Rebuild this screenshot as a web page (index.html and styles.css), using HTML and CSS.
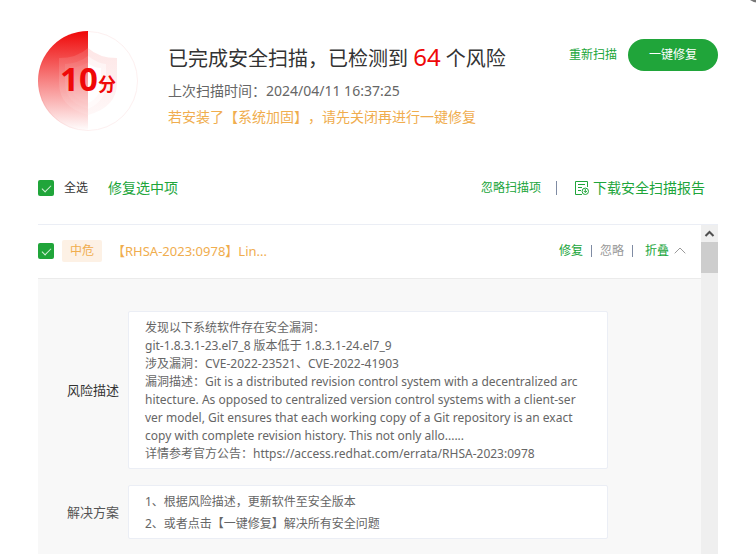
FILE: index.html
```html
<!DOCTYPE html>
<html lang="zh-CN">
<head>
<meta charset="utf-8">
<title>安全扫描</title>
<link rel="stylesheet" href="styles.css">
</head>
<body>
<button class="close" type="button" aria-label="关闭"></button>
<main class="page">
  <header class="summary">
    <div class="score">
      <svg class="score-art" viewBox="0 0 100 100" aria-hidden="true">
        <defs>
          <linearGradient id="half" x1="0" y1="0" x2="0" y2="1">
            <stop offset="0" stop-color="#ef0808"/>
            <stop offset="1" stop-color="#ef0808" stop-opacity="0"/>
          </linearGradient>
          <linearGradient id="shieldRed" x1="0" y1="0" x2="0" y2="1">
            <stop offset="0" stop-color="#ef0808" stop-opacity=".1"/>
            <stop offset="1" stop-color="#ef0808" stop-opacity=".03"/>
          </linearGradient>
          <clipPath id="leftSide"><path d="M0 0H50V100H0Z"/></clipPath>
          <clipPath id="rightSide"><path d="M50 0H100V100H50Z"/></clipPath>
        </defs>
        <circle cx="50" cy="50" r="49.5" fill="none" stroke="#fdf0f0"/>
        <path d="M50 0A50 50 0 0 0 50 100Z" fill="url(#half)"/>
        <g clip-path="url(#leftSide)" fill="#fff" fill-opacity=".12">
          <path d="M50 17Q39 27 21 27V52Q21 76 50 84Z"/>
          <path d="M50 25Q41 32 27 33V52Q27 71 50 78Z" fill-opacity=".08"/>
          <path d="M50 31Q43 36 32 37V52Q32 67 50 73Z" fill-opacity=".05"/>
        </g>
        <g clip-path="url(#rightSide)">
          <path d="M50 17Q61 27 79 27V52Q79 76 50 84Z" fill="url(#shieldRed)"/>
          <path d="M50 25Q59 32 68 33V52Q68 70 50 78Z" fill="#fff" fill-opacity=".5"/>
          <path d="M50 32Q56 37 63 37V52Q63 66 50 72Z" fill="#fff"/>
        </g>
      </svg>
      <p class="score-text">10<span class="score-unit">分</span></p>
    </div>
    <div class="info">
      <h1 class="title">已完成安全扫描，已检测到 <span class="count">64</span> 个风险</h1>
      <p class="time">上次扫描时间：2024/04/11 16:37:25</p>
      <p class="notice">若安装了【系统加固】，请先关闭再进行一键修复</p>
    </div>
    <div class="actions">
      <a class="link" href="#">重新扫描</a>
      <button class="primary" type="button">一键修复</button>
    </div>
  </header>

  <div class="toolbar">
    <label class="select-all"><input class="check" type="checkbox" checked>全选</label>
    <a class="link large" href="#">修复选中项</a>
    <div class="toolbar-right">
      <a class="link" href="#">忽略扫描项</a>
      <span class="bar"></span>
      <a class="link large download" href="#">
        <svg class="report-icon" viewBox="0 0 14 14" fill="none" stroke="#20a53a" aria-hidden="true">
          <path d="M12.500 6V.5H.5v13H7"/>
          <path d="M3 3.500h7M3 6.500h4M3 9.500h3"/>
          <circle cx="10.300" cy="10.300" r="3.200"/>
          <path d="M10.300 8v3.200M8.800 10l1.500 1.500L12 10"/>
        </svg>下载安全扫描报告</a>
    </div>
  </div>

  <section class="list">
    <div class="items">
      <div class="item">
        <input class="check" type="checkbox" checked aria-label="选择 RHSA-2023:0978">
        <span class="level">中危</span>
        <span class="name">【RHSA-2023:0978】Lin...</span>
        <div class="item-actions">
          <a class="link" href="#">修复</a>
          <span class="bar small"></span>
          <a class="link muted" href="#">忽略</a>
          <span class="bar small"></span>
          <a class="link fold" href="#">折叠<svg class="arrow" viewBox="0 0 12 7" fill="none" stroke="#999" aria-hidden="true"><path d="M.7 6.300 6 1l5.300 5.300"/></svg></a>
        </div>
      </div>
      <dl class="detail">
        <div class="row">
          <dt class="label strong">风险描述</dt>
          <dd class="box desc">发现以下系统软件存在安全漏洞：<br>git-1.8.3.1-23.el7_8 版本低于 1.8.3.1-24.el7_9<br>涉及漏洞：CVE-2022-23521、CVE-2022-41903<br>漏洞描述：Git is a distributed revision control system with a decentralized arc<br>hitecture. As opposed to centralized version control systems with a client-ser<br>ver model, Git ensures that each working copy of a Git repository is an exact<br>copy with complete revision history. This not only allo......<br>详情参考官方公告：https://access.redhat.com/errata/RHSA-2023:0978</dd>
        </div>
        <div class="row">
          <dt class="label">解决方案</dt>
          <dd class="box steps">1、根据风险描述，更新软件至安全版本<br>2、或者点击【一键修复】解决所有安全问题</dd>
        </div>
      </dl>
    </div>
    <div class="scrollbar" aria-hidden="true">
      <svg class="scroll-up" viewBox="0 0 17 17" fill="none" stroke="#505050" stroke-width="2"><path d="M4.500 11l4-4 4 4"/></svg>
      <div class="thumb"></div>
    </div>
  </section>
</main>
</body>
</html>
```

FILE: styles.css
```css
* { box-sizing: border-box; }

body {
  margin: 0;
  background: #fff;
  color: #666;
  font: 12px/18px "Noto Sans", "Noto Sans CJK SC", sans-serif;
  text-spacing-trim: space-all;
  overflow: hidden;
}

h1, p, dl, dd { margin: 0; }

.page {
  display: flex;
  flex-direction: column;
  height: 100vh;
  padding: 31px 38px 0;
}

.close {
  position: absolute;
  top: -27px;
  right: -18px;
  width: 30px;
  height: 30px;
  padding: 0;
  border: 0;
  border-radius: 50%;
  background: #777;
}

.link { color: #20a53a; text-decoration: none; white-space: nowrap; }
.large { font-size: 14px; }
.muted { color: #999; }

.summary { display: flex; gap: 30px; }

.score {
  display: grid;
  flex: none;
  width: 100px;
  height: 100px;
}
.score-art, .score-text { grid-area: 1 / 1; }
.score-art { width: 100%; height: 100%; }
.score-text {
  position: relative;
  align-self: center;
  justify-self: center;
  color: #ef0808;
  font-size: 33px;
  font-weight: 700;
  line-height: 40px;
  white-space: nowrap;
}
.score-unit { font-size: 18px; }

.info { flex: 1; padding-top: 12px; white-space: nowrap; }
.title {
  height: 30px;
  margin-bottom: 5px;
  color: #333;
  font-size: 20px;
  font-weight: 400;
  line-height: 28px;
}
.count { color: #ef0808; font-size: 24px; }
.time, .notice { font-size: 14px; line-height: 26px; }
.notice { color: #f0ad4e; }

.actions {
  display: flex;
  align-items: center;
  gap: 11px;
  height: 32px;
  margin-top: 8px;
}
.primary {
  width: 90px;
  height: 32px;
  padding: 0;
  border: 0;
  border-radius: 16px;
  background: #20a53a;
  color: #fff;
  font: inherit;
}

.toolbar {
  display: flex;
  align-items: center;
  gap: 20px;
  height: 24px;
  margin: 45px 0 24px;
}
.select-all {
  display: flex;
  align-items: center;
  gap: 10px;
  color: #333;
}
.toolbar-right {
  display: flex;
  align-items: center;
  gap: 15px;
  margin-left: auto;
  padding-right: 13px;
}
.download { display: flex; align-items: center; gap: 4px; padding-left: 3px; }
.report-icon { width: 14px; height: 14px; }

.check {
  display: grid;
  flex: none;
  width: 16px;
  height: 16px;
  margin: 0;
  appearance: none;
  border-radius: 2px;
  background: #20a53a;
}
.check::after {
  content: "";
  box-sizing: border-box;
  width: 9px;
  height: 5px;
  margin: 5px 4px;
  border: solid #d5f0da;
  border-width: 0 0 1px 1px;
  transform: rotate(-45deg);
}

.bar { width: 1px; height: 14px; background: #7f8ba3; }
.small { height: 12px; }

.list {
  display: flex;
  flex: 1;
  min-height: 0;
  border-top: 1px solid #ebeef5;
}
.items { flex: 1; display: flex; flex-direction: column; min-width: 0; }
.item {
  display: flex;
  flex: none;
  align-items: center;
  gap: 8px;
  height: 54px;
  padding-bottom: 2px;
  border-bottom: 1px solid #ebebeb;
}
.level {
  padding: 2px 8px;
  border-radius: 2px;
  background: #fdf1e5;
  color: #f0ad4e;
}
.name { margin-left: 2px; color: #f0ad4e; font-size: 13px; white-space: nowrap; }
.item-actions {
  display: flex;
  align-items: center;
  gap: 8px;
  margin-left: auto;
  padding-right: 15px;
}
.fold { display: flex; align-items: center; gap: 5px; padding-left: 4px; }
.arrow { width: 12px; height: 7px; }

.detail {
  display: flex;
  flex: 1;
  flex-direction: column;
  gap: 16px;
  padding: 32px 93px 0 0;
  background: #f8f8f8;
}
.row { display: flex; align-items: center; }
.label { flex: none; width: 90px; padding-right: 9px; font-size: 13px; text-align: right; color: #555; }
.strong { color: #333; }
.box {
  flex: 1;
  min-width: 0;
  padding: 7px 16px 5px;
  border: 1px solid #ebeef5;
  border-radius: 2px;
  background: #fff;
  white-space: nowrap;
}
.steps { padding-block: 5px 3px; line-height: 22px; }

.scrollbar { flex: none; width: 17px; background: #efefef; }
.scroll-up { display: block; width: 17px; height: 17px; }
.thumb { height: 31px; background: #cdcdcd; }
```
